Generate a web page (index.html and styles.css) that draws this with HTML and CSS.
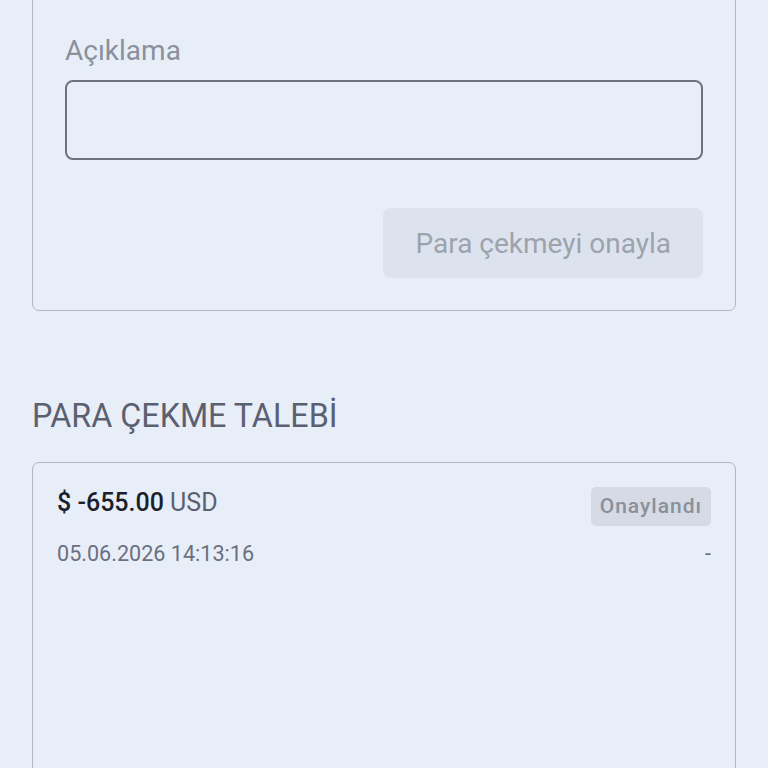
FILE: index.html
```html
<!DOCTYPE html>
<html lang="tr">
<head>
  <meta charset="UTF-8">
  <title>Para Çekme</title>
  <meta name="viewport" content="width=device-width, initial-scale=1" />
  <link rel="stylesheet" href="styles.css">
</head>
<body>
  <div class="page">
    <form class="card withdraw">
      <label class="field-label" for="note">Açıklama</label>
      <input type="text" id="note" class="field-input">
      <div class="actions">
        <button type="button" class="btn-confirm" disabled>Para çekmeyi onayla</button>
      </div>
    </form>

    <h2 class="section-title">PARA ÇEKME TALEBİ</h2>

    <div class="card requests">
      <div class="req-row">
        <div class="amount"><strong>$ -655.00</strong> USD</div>
        <span class="badge">Onaylandı</span>
      </div>
      <div class="req-row meta">
        <span>05.06.2026 14:13:16</span>
        <span>-</span>
      </div>
    </div>
  </div>
</body>
</html>
```

FILE: styles.css
```css
body { margin: 0; background: #e8eef8; font-family: Roboto, "Noto Sans", sans-serif; color: #5b6070; }
.page { padding: 0 32px; }
.card { border: 1px solid #b0b5c0; border-radius: 7px; background: #e8eef8; }
.withdraw { margin-top: -10px; padding: 43px 32px 32px; }
.field-label { display: block; font-size: 28px; line-height: 33px; color: #8a909c; }
.field-input { display: block; box-sizing: border-box; width: 100%; height: 80px; margin-top: 13px; border: 2px solid #6d7180; border-radius: 8px; background: transparent; font: inherit; }
.actions { display: flex; justify-content: flex-end; margin-top: 48px; }
.btn-confirm { height: 70px; padding: 0 32px; border: 0; border-radius: 8px; background: #dce3ee; color: #9da3ad; font-family: Roboto, sans-serif; font-size: 28px; }
.section-title { margin: 86px 0 27px; font-size: 32.3px; font-weight: 400; line-height: 38px; color: #5b6070; }
.requests { height: 400px; padding: 24px 24px; }
.req-row { display: flex; justify-content: space-between; align-items: flex-start; }
.amount { padding-top: 2px; font-size: 25px; line-height: 28px; color: #5b6070; }
.amount strong { color: #1b1f2b; font-weight: 500; }
.badge { padding: 8px 9px; border-radius: 5px; background: #d5dae4; color: #8a909b; font-size: 21px; line-height: 23px; font-weight: 500; letter-spacing: 1px; }
.meta { margin-top: 15px; font-size: 21.6px; line-height: 26px; color: #6b7080; }
```
